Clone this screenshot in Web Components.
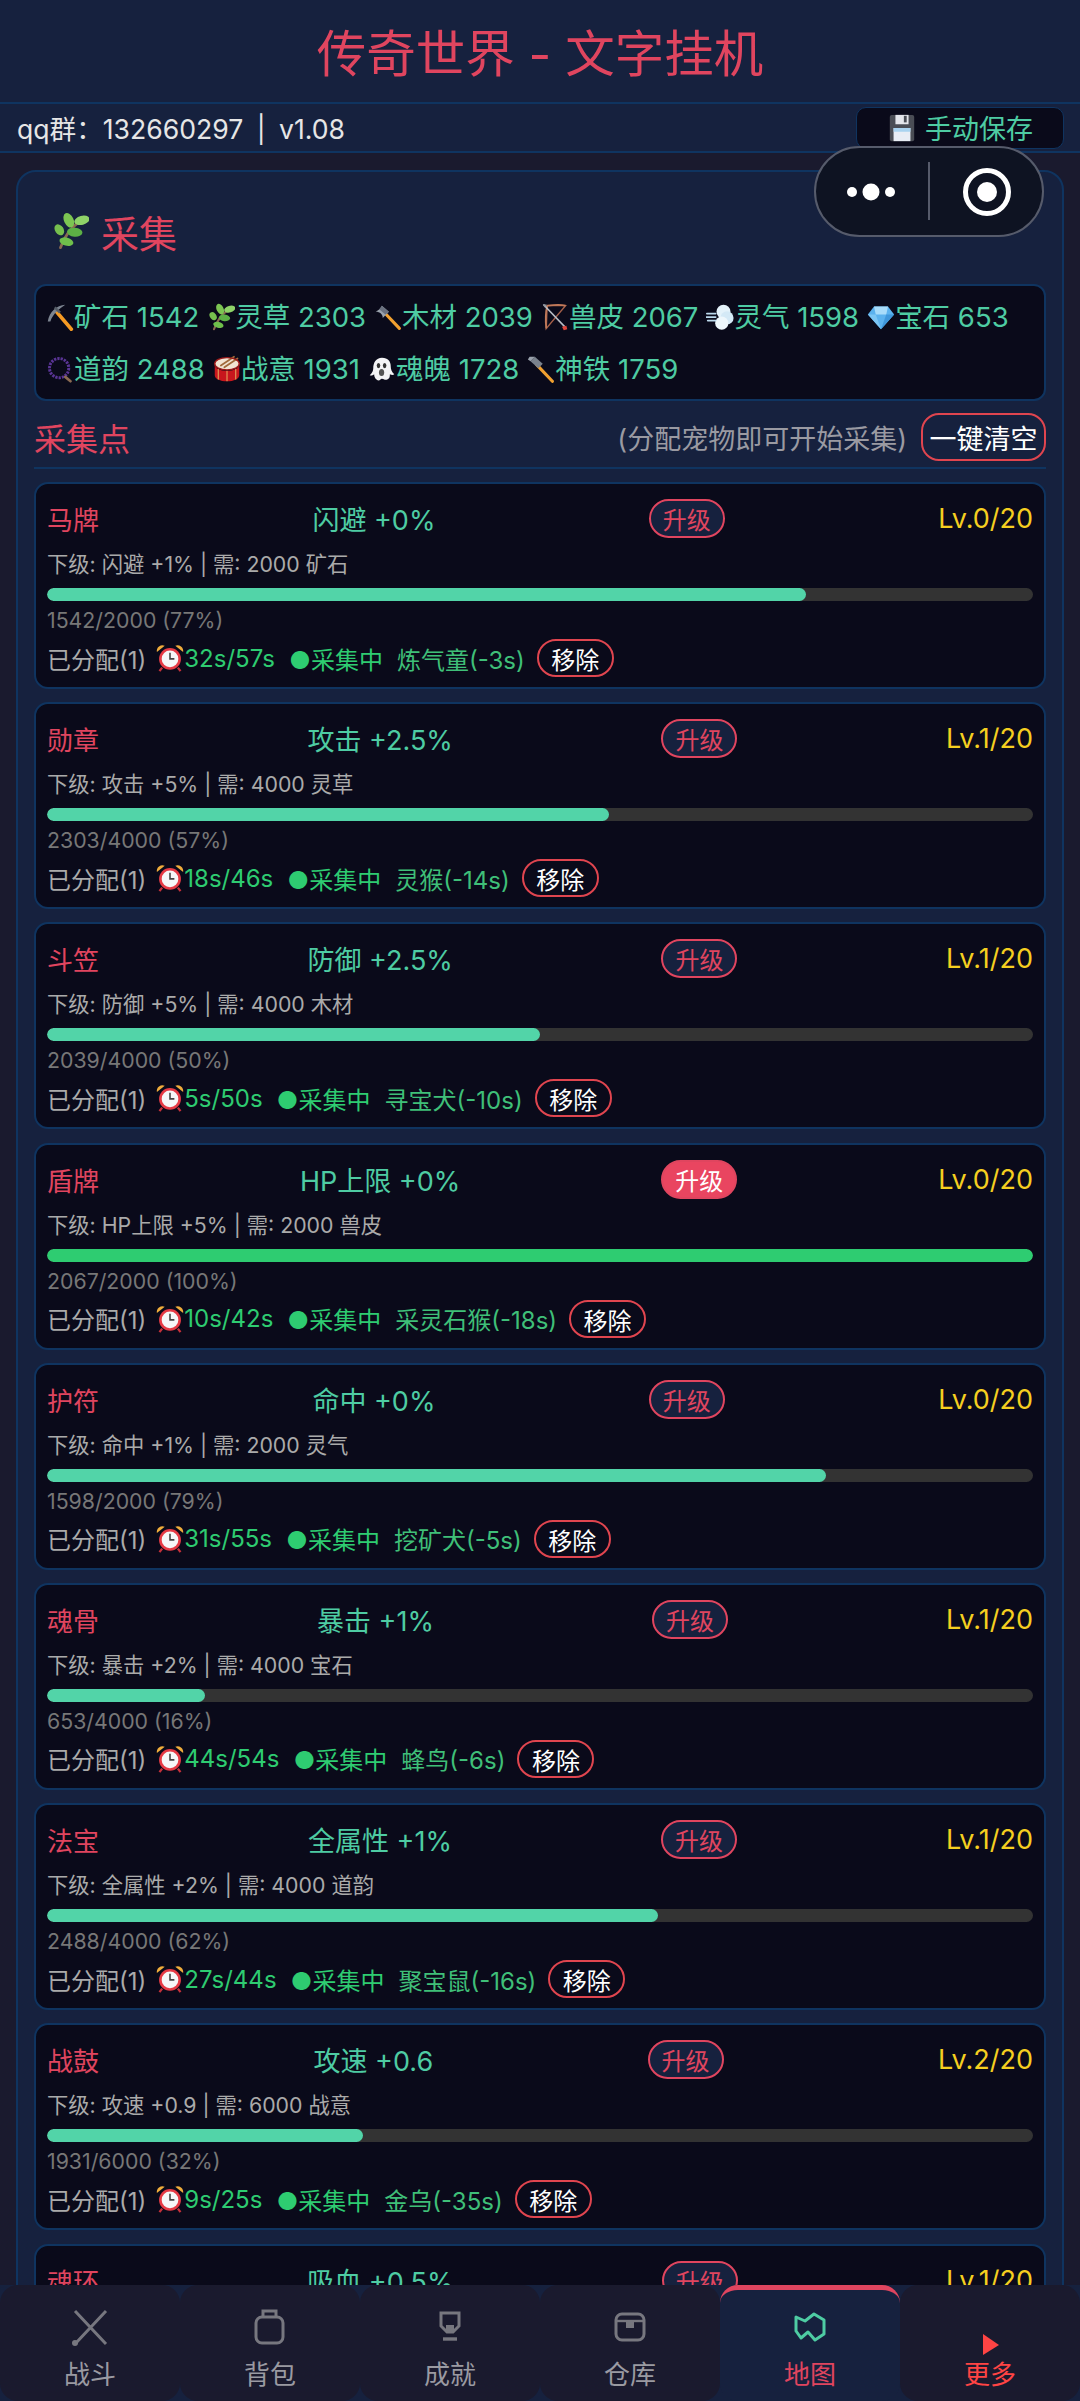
<!DOCTYPE html>
<html lang="zh"><head><meta charset="utf-8"><title>传奇世界 - 文字挂机</title>
<style>
html,body{margin:0;padding:0;height:2401px;overflow:hidden;background:#1a1a2e;color:#fff;font-family:Inter,"Noto Sans CJK SC","Noto Sans",sans-serif}
</style></head><body>
<game-app></game-app>
<script>
const ICONS={
pick:`<path d="M12 10 L29 30" stroke="#f59a23" stroke-width="4" stroke-linecap="round"/><path d="M2 21 C4 10 12 3 22 2 C16 6 8 12 5 21Z" fill="#7c8490"/><path d="M9 6l6 6 2-2-6-6z" fill="#555c66"/>`,
herb:`<path d="M8 30 C11 21 17 13 25 7" stroke="#8a6a52" stroke-width="2.4" fill="none" stroke-linecap="round"/><ellipse cx="15" cy="7" rx="4" ry="6.5" transform="rotate(-25 15 7)" fill="#7cc552"/><ellipse cx="26" cy="7" rx="6.5" ry="3.8" transform="rotate(-15 26 7)" fill="#8fd368"/><ellipse cx="7" cy="15" rx="3.6" ry="5" transform="rotate(-35 7 15)" fill="#76bf4e"/><ellipse cx="20" cy="17" rx="6.5" ry="3.8" transform="rotate(5 20 17)" fill="#5cb045"/><ellipse cx="13" cy="25" rx="6" ry="3.4" transform="rotate(15 13 25)" fill="#6fbf4b"/>`,
axe:`<path d="M11 10 L29 29" stroke="#f0a030" stroke-width="3.6" stroke-linecap="round"/><path d="M9 3 L17 10 L10 17 C10 13 7 10 2 10 C5 8 8 6 9 3Z" fill="#9aa2ad"/><path d="M9 3 L17 10 L13 13 L6 7Z" fill="#6b7280"/>`,
bow:`<path d="M7 3 H28 L6 29 Z" fill="none" stroke="#a5604a" stroke-width="1.6"/><path d="M7 3 C5 12 5 20 6 29 M7 3 C16 2 24 2 28 3" fill="none" stroke="#c27a5a" stroke-width="2"/><path d="M3 2 L27 27" stroke="#b9bec6" stroke-width="1.8"/><path d="M2 1l5 1-3 3z" fill="#8d949e"/><path d="M24 27l5-1 1 4-4 1z" fill="#e0463c"/>`,
dash:`<circle cx="20" cy="10" r="8" fill="#e4f2fa"/><circle cx="24" cy="17" r="7.5" fill="#d4e9f6"/><circle cx="18" cy="23" r="7.5" fill="#eef7fc"/><path d="M1 12h10M0 16h11M2 20h9" stroke="#bcd9ec" stroke-width="2" stroke-linecap="round"/>`,
gem:`<path d="M8 4 H24 L31 13 L16 30 L1 13Z" fill="#5bb2ee"/><path d="M8 4H24L22 13H10Z" fill="#a8dcfa"/><path d="M1 13H10L16 30Z" fill="#7cc6f4"/><path d="M31 13H22L16 30Z" fill="#3f97db"/>`,
beads:`<circle cx="15" cy="15" r="11" fill="none" stroke="#5a3596" stroke-width="3.4" stroke-dasharray="2.6 1.2"/><path d="M22 25l6 5" stroke="#8a6a52" stroke-width="3" stroke-linecap="round"/>`,
drum:`<ellipse cx="16" cy="10" rx="14" ry="7" fill="#f1e4d2"/><path d="M2 11v12c0 4 6 7 14 7s14-3 14-7V11c0 4-6 7-14 7S2 15 2 11z" fill="#c8161d"/><path d="M6 16v12M16 18v12M26 16v12" stroke="#e9c46a" stroke-width="1"/><path d="M9 12L24 2M13 14L28 4" stroke="#a06a3a" stroke-width="2" stroke-linecap="round"/><ellipse cx="16" cy="10" rx="14" ry="7" fill="none" stroke="#9c1a1a" stroke-width="1.6"/>`,
ghost:`<path d="M16 3c-7 0-10 6-10 12 0 3-1 5-4 8 2 1 4 0 5-1 0 4 3 7 5 7s2-2 4-2 3 2 6 1c3-1 3-4 3-6 2 1 4 1 5 0-3-3-4-6-4-9 0-6-3-10-10-10z" fill="#f4f4f6"/><ellipse cx="12" cy="12" rx="2" ry="3" fill="#333"/><ellipse cx="19" cy="12" rx="2" ry="3" fill="#333"/><ellipse cx="15.5" cy="20" rx="3" ry="4" fill="#555"/>`,
hammer:`<path d="M11 11 L29 30" stroke="#f0a030" stroke-width="3.6" stroke-linecap="round"/><path d="M9 2 L18 10 L13 15 L4 7Z" fill="#7a828d"/><path d="M4 7 L9 2 L3 2 L1 5Z" fill="#9aa2ad"/>`,
alarm:`<circle cx="16" cy="17" r="12.5" fill="#e63b45"/><circle cx="16" cy="17" r="9.5" fill="#f6f7f8"/><path d="M16 10v7h5" stroke="#444" stroke-width="1.8" fill="none"/><path d="M1 9a6.5 6.5 0 0 1 9-7z M31 9a6.5 6.5 0 0 0-9-7z" fill="#f0ad3c"/><path d="M7 27l-3 4M25 27l3 4" stroke="#c4303a" stroke-width="2.6"/>`,
floppy:`<rect x="3" y="2" width="26" height="28" rx="2" fill="#4a4d55"/><rect x="7" y="16" width="18" height="14" fill="#e8edf5"/><rect x="7" y="16" width="18" height="4" fill="#a9d3f0"/><rect x="9" y="2" width="14" height="10" fill="#e3e5ea"/><rect x="18" y="3" width="3" height="7" fill="#4a4d55"/>`
};
const h=(tag,tpl)=>customElements.define(tag,class extends HTMLElement{
  connectedCallback(){ if(this.shadowRoot)return; const r=this.attachShadow({mode:'open'}); r.innerHTML=typeof tpl==='function'?tpl(this):tpl; }
});
h('emoji-icon',el=>{const s=el.getAttribute('size')||28;return `<style>:host{display:inline-flex;flex:none;width:${s}px;height:${s}px}svg{width:100%;height:100%;display:block}</style><svg viewBox="0 0 32 32">${ICONS[el.getAttribute('name')]}</svg>`});

h('app-header',`<style>:host{display:flex;align-items:center;justify-content:center;height:102px;box-sizing:border-box;background:#16213e;color:#e0455f;font-size:49.5px;padding-bottom:2px}</style><slot></slot>`);

h('info-bar',`<style>:host{display:flex;align-items:center;justify-content:space-between;height:51px;box-sizing:border-box;background:#16213e;border-top:2px solid #0f3460;border-bottom:2px solid #0f3460;padding:0 16px 0 17px;font-size:26.6px;word-spacing:6px;color:#e6e6e6}
button{font:inherit;word-spacing:0;display:flex;align-items:center;gap:8px;width:208px;height:42px;justify-content:center;box-sizing:border-box;background:#0a0a1a;color:#4ecca3;border:1px solid #0f3460;border-radius:10px;padding:0;font-size:27px}</style><span><slot></slot></span><button><emoji-icon name="floppy" size="30"></emoji-icon>手动保存</button>`);

h('wx-capsule',`<style>:host{position:absolute;left:814px;top:146px;width:230px;height:91px;box-sizing:border-box;border:2px solid #565b6b;border-radius:46px;background:#0e1322;z-index:5;display:block}svg{position:absolute;left:-2px;top:-2px}</style><svg width="230" height="91" viewBox="0 0 230 91" fill="#fff"><circle cx="38" cy="46" r="5"/><circle cx="57" cy="46" r="8.5"/><circle cx="76" cy="46" r="5"/><rect x="114" y="16" width="2" height="58" fill="#565b6b"/><circle cx="173" cy="46" r="21.5" fill="none" stroke="#fff" stroke-width="5"/><circle cx="173" cy="46" r="10"/></svg>`);

h('panel-card',`<style>:host{display:block;margin:17px 16px 0;padding:0 16px;box-sizing:border-box;background:#16213e;border:2px solid #0f3460;border-radius:20px;height:2400px}
.head{display:flex;align-items:center;gap:12px;height:60px;margin-top:29px;padding-left:17px;color:#e0455f;font-size:38px}</style>
<div class="head"><emoji-icon name="herb" size="38"></emoji-icon><span>采集</span></div><slot></slot>`);

h('res-box',`<style>:host{display:flex;flex-wrap:wrap;align-items:center;align-content:center;column-gap:8px;margin-top:23px;height:117px;box-sizing:border-box;padding:0 10px;background:#0a0a1a;border:2px solid #0f3460;border-radius:12px;line-height:52px;row-gap:0}</style><slot></slot>`);
h('res-item',`<style>:host{display:inline-flex;align-items:center;height:52px;color:#4ecca3;font-size:27.5px;white-space:nowrap}</style><slot></slot>`);

h('section-row',`<style>:host{display:flex;align-items:center;justify-content:space-between;height:48px;margin-top:12px;padding-bottom:6px;border-bottom:2px solid #0f3460;box-sizing:content-box}
.t{color:#e0455f;font-size:32px}.r{display:flex;align-items:center;gap:14px;color:#9a9aa2;font-size:27px}
button{font:inherit;font-size:27px;color:#fff;background:#16213e;border:2px solid #e0454f;border-radius:18px;height:48px;width:125px;padding:0;box-sizing:border-box}</style>
<span class="t"><slot name="t"></slot></span><span class="r"><slot></slot><button>一键清空</button></span>`);

h('item-list',`<style>:host{display:flex;flex-direction:column;gap:13.2px;margin-top:13px}</style><slot></slot>`);

h('collect-item',el=>{
 const a=n=>el.getAttribute(n);const pct=+a('pct');const full=pct>=100;
 return `<style>:host{display:block;height:207px;box-sizing:border-box;padding:15px 11px 0;background:#0a0a1a;border:2px solid #0f3460;border-radius:14px}
 .top{display:flex;align-items:center;justify-content:space-between;height:39px;font-size:27px}
 .n{color:#e0455f;font-size:26px}.e{color:#4ecca3}.l{color:#f5cf20}
 .up{font:inherit;font-size:24px;height:39px;width:76px;padding:0;box-sizing:border-box;border-radius:20px;border:2px solid #e0455f;background:${full?'#e94560':'#16213e'};color:${full?'#fff':'#e0455f'}}
 .sub{margin-top:11px;height:30px;line-height:30px;font-size:21.3px;color:#aaa}
 .bar{margin-top:9px;height:13px;border-radius:7px;background:#333;overflow:hidden}
 .fill{height:100%;width:${pct}%;border-radius:7px;background:${full?'#2ecc71':'#52d4a8'}}
 .pr{margin-top:4px;height:30px;line-height:30px;font-size:21.3px;color:#777}
 .m{display:flex;align-items:center;margin-top:4px;height:38px;font-size:24px;color:#aaa;white-space:nowrap}
 .g{color:#2ecc71}.gt{color:#3fbf78}
 .rm{font:inherit;font-size:24px;color:#fff;background:#0a0a1a;border:2px solid #e0454f;border-radius:20px;height:38px;width:77px;padding:0;margin-left:12px;box-sizing:border-box}
 emoji-icon{margin-left:10px;margin-right:0}</style>
 <div class="top"><span class="n">${a('n')}</span><span class="e">${a('e')}</span><button class="up">升级</button><span class="l">${a('l')}</span></div>
 ${a('s')?`<div class="sub">${a('s')}</div><div class="bar"><div class="fill"></div></div><div class="pr">${a('p')}</div>
 <div class="m"><span>已分配(1)</span><emoji-icon name="alarm" size="28"></emoji-icon><span class="g">${a('t')}</span><span class="g" style="margin-left:14px">●采集中</span><span class="gt" style="margin-left:14px">${a('pet')}</span><button class="rm">移除</button></div>`:''}`;
});

h('bottom-nav',`<style>:host{position:fixed;left:0;right:0;bottom:0;height:116px;display:flex;background:#16213e;z-index:4}</style><slot></slot>`);
const TAB={
 x:`<path d="M6 4L37 37M37 4L6 37" stroke="#77777f" stroke-width="3" fill="none"/><circle cx="6" cy="36" r="3" fill="#77777f"/>`,
 bag:`<rect x="7" y="10" width="27" height="26" rx="6" stroke="#77777f" stroke-width="3" fill="none"/><path d="M14 10V4h13v6" stroke="#77777f" stroke-width="3" fill="none"/>`,
 cup:`<path d="M12 6H30V19L24 25H18L12 19Z" stroke="#77777f" stroke-width="3" fill="none"/><path d="M17 18h8v6h-8z" fill="#77777f"/><path d="M14 32h14" stroke="#77777f" stroke-width="3.4"/>`,
 box:`<rect x="7" y="7" width="28" height="26" rx="6" stroke="#77777f" stroke-width="3" fill="none"/><path d="M7 14h28" stroke="#77777f" stroke-width="2.4"/><rect x="17" y="15" width="8" height="6" fill="#77777f"/>`,
 map:`<path d="M7 10L16 14L25 7L35 13V27L26 33L19 25L12 31L7 24Z" stroke="#4ecca3" stroke-width="3" fill="none" stroke-linejoin="round"/>`,
 more:`<path d="M14 27L30 38L14 48Z" fill="#ff4444"/>`
};
h('nav-tab',el=>{const ac=el.hasAttribute('active');const c=el.getAttribute('color')||'#9a9aa2';
 return `<style>:host{flex:1;display:flex;flex-direction:column;align-items:center;box-sizing:border-box;background:${ac?'#16213e':'#1a1a2e'};border-radius:18px;${ac?'border-top:5px solid #e0455f;':''}padding-top:${ac?17:22}px;color:${c};font-size:26px}
 svg{display:block;width:43px;height:50px;overflow:visible}span{line-height:30px;margin-top:3px}</style><svg viewBox="0 0 43 50">${TAB[el.getAttribute('i')]}</svg><span><slot></slot></span>`});

const RES=[['pick','矿石 1542'],['herb','灵草 2303'],['axe','木材 2039'],['bow','兽皮 2067'],['dash','灵气 1598'],['gem','宝石 653'],['beads','道韵 2488'],['drum','战意 1931'],['ghost','魂魄 1728'],['hammer','神铁 1759']];
const ITEMS=[
['马牌','闪避 +0%','Lv.0/20','下级: 闪避 +1% | 需: 2000 矿石','1542/2000 (77%)',77,'32s/57s','炼气童(-3s)'],
['勋章','攻击 +2.5%','Lv.1/20','下级: 攻击 +5% | 需: 4000 灵草','2303/4000 (57%)',57,'18s/46s','灵猴(-14s)'],
['斗笠','防御 +2.5%','Lv.1/20','下级: 防御 +5% | 需: 4000 木材','2039/4000 (50%)',50,'5s/50s','寻宝犬(-10s)'],
['盾牌','HP上限 +0%','Lv.0/20','下级: HP上限 +5% | 需: 2000 兽皮','2067/2000 (100%)',100,'10s/42s','采灵石猴(-18s)'],
['护符','命中 +0%','Lv.0/20','下级: 命中 +1% | 需: 2000 灵气','1598/2000 (79%)',79,'31s/55s','挖矿犬(-5s)'],
['魂骨','暴击 +1%','Lv.1/20','下级: 暴击 +2% | 需: 4000 宝石','653/4000 (16%)',16,'44s/54s','蜂鸟(-6s)'],
['法宝','全属性 +1%','Lv.1/20','下级: 全属性 +2% | 需: 4000 道韵','2488/4000 (62%)',62,'27s/44s','聚宝鼠(-16s)'],
['战鼓','攻速 +0.6','Lv.2/20','下级: 攻速 +0.9 | 需: 6000 战意','1931/6000 (32%)',32,'9s/25s','金乌(-35s)'],
['魂环','吸血 +0.5%','Lv.1/20','','',0,'','']];
h('game-app',`<style>:host{display:block;height:2401px;overflow:hidden;position:relative;background:#1a1a2e}</style>
<app-header>传奇世界 - 文字挂机</app-header>
<info-bar>qq群：132660297 | v1.08</info-bar>
<wx-capsule></wx-capsule>
<panel-card>
<res-box>${RES.map(r=>`<res-item><emoji-icon name="${r[0]}" size="28"></emoji-icon>${r[1]}</res-item>`).join('')}</res-box>
<section-row><span slot="t">采集点</span>(分配宠物即可开始采集)</section-row>
<item-list>${ITEMS.map(i=>`<collect-item n="${i[0]}" e="${i[1]}" l="${i[2]}" s="${i[3]}" p="${i[4]}" pct="${i[5]}" t="${i[6]}" pet="${i[7]}"></collect-item>`).join('')}</item-list>
</panel-card>
<bottom-nav><nav-tab i="x">战斗</nav-tab><nav-tab i="bag">背包</nav-tab><nav-tab i="cup">成就</nav-tab><nav-tab i="box">仓库</nav-tab><nav-tab i="map" active color="#e0455f">地图</nav-tab><nav-tab i="more" color="#ff4444">更多</nav-tab></bottom-nav>`);
</script>
</body></html>
